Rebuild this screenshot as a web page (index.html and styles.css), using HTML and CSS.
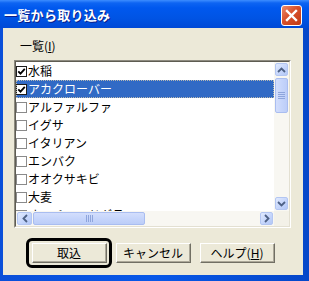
FILE: index.html
```html
<!DOCTYPE html>
<html lang="ja">
<head>
  <meta charset="UTF-8">
  <title>一覧から取り込み</title>
  <link rel="stylesheet" href="styles.css">
</head>
<body>

<div class="window">
  <div class="titlebar">
    <span class="title">一覧から取り込み</span>
    <span class="close">
      <svg width="13" height="13" viewBox="0 0 13 13"><path d="M2 2 L11 11 M11 2 L2 11" stroke="#fff" stroke-width="2.4" stroke-linecap="square"/></svg>
    </span>
  </div>

  <div class="body">
    <div class="label">一覧(<u>I</u>)</div>

    <div class="listbox">
      <div class="listinner">
        <div class="items">
          <div class="item"><svg class="cb" width="11" height="11" viewBox="0 0 11 11"><rect x="0.5" y="0.5" width="10" height="10" fill="#fff" stroke="#1c1c1c"/><path d="M2.3 5.3 L4.5 7.6 L8.8 2.8" fill="none" stroke="#000" stroke-width="1.8"/></svg>水稲</div>
          <div class="item selected"><svg class="cb" width="11" height="11" viewBox="0 0 11 11"><rect x="0.5" y="0.5" width="10" height="10" fill="#fff" stroke="#1c1c1c"/><path d="M2.3 5.3 L4.5 7.6 L8.8 2.8" fill="none" stroke="#000" stroke-width="1.8"/></svg>アカクローバー</div>
          <div class="item"><svg class="cb" width="11" height="11" viewBox="0 0 11 11"><rect x="0.5" y="0.5" width="10" height="10" fill="#fff" stroke="#8a8a8a"/></svg>アルファルファ</div>
          <div class="item"><svg class="cb" width="11" height="11" viewBox="0 0 11 11"><rect x="0.5" y="0.5" width="10" height="10" fill="#fff" stroke="#8a8a8a"/></svg>イグサ</div>
          <div class="item"><svg class="cb" width="11" height="11" viewBox="0 0 11 11"><rect x="0.5" y="0.5" width="10" height="10" fill="#fff" stroke="#8a8a8a"/></svg>イタリアン</div>
          <div class="item"><svg class="cb" width="11" height="11" viewBox="0 0 11 11"><rect x="0.5" y="0.5" width="10" height="10" fill="#fff" stroke="#8a8a8a"/></svg>エンバク</div>
          <div class="item"><svg class="cb" width="11" height="11" viewBox="0 0 11 11"><rect x="0.5" y="0.5" width="10" height="10" fill="#fff" stroke="#8a8a8a"/></svg>オオクサキビ</div>
          <div class="item"><svg class="cb" width="11" height="11" viewBox="0 0 11 11"><rect x="0.5" y="0.5" width="10" height="10" fill="#fff" stroke="#8a8a8a"/></svg>大麦</div>
          <div class="item"><svg class="cb" width="11" height="11" viewBox="0 0 11 11"><rect x="0.5" y="0.5" width="10" height="10" fill="#fff" stroke="#8a8a8a"/></svg>オーチャードグラス</div>
        </div>

        <div class="vscroll">
          <div class="sbtn"><svg width="9" height="6" viewBox="0 0 9 6"><path d="M1 5 L4.5 1.5 L8 5" fill="none" stroke="#4d6185" stroke-width="1.8"/></svg></div>
          <div class="vthumb"><span></span><span></span><span></span><span></span></div>
          <div class="fill"></div>
          <div class="sbtn"><svg width="9" height="6" viewBox="0 0 9 6"><path d="M1 1 L4.5 4.5 L8 1" fill="none" stroke="#4d6185" stroke-width="1.8"/></svg></div>
        </div>

        <div class="hscroll">
          <div class="sbtn"><svg width="6" height="9" viewBox="0 0 6 9"><path d="M5 1 L1.5 4.5 L5 8" fill="none" stroke="#4d6185" stroke-width="1.8"/></svg></div>
          <div class="hthumb"><span></span><span></span><span></span><span></span></div>
          <div class="fill"></div>
          <div class="sbtn"><svg width="6" height="9" viewBox="0 0 6 9"><path d="M1 1 L4.5 4.5 L1 8" fill="none" stroke="#4d6185" stroke-width="1.8"/></svg></div>
        </div>

        <div class="corner"></div>
      </div>
    </div>

    <div class="buttons">
      <button class="btn default">取込</button>
      <button class="btn">キャンセル</button>
      <button class="btn">ヘルプ(<u>H</u>)</button>
    </div>
  </div>
</div>

</body>
</html>
```

FILE: styles.css
```css
* {
  box-sizing: border-box;
}

body {
  margin: 0;
  width: 309px;
  height: 281px;
  overflow: hidden;
  font-family: "Noto Sans CJK JP", "Noto Sans", sans-serif;
  font-size: 12px;
}

.window {
  width: 309px;
  height: 281px;
  display: flex;
  flex-direction: column;
  background: linear-gradient(to right, #0a4fd9, #0858e8 50%, #0547c9);
  padding: 0 6px 6px 3px;
}

.titlebar {
  height: 28px;
  margin: 0 -6px 0 -3px;
  display: flex;
  align-items: center;
  justify-content: space-between;
  padding: 0 7px 0 4px;
  background: linear-gradient(#3d8dff 0, #0d64f2 3px, #0058ee 8px, #0054e4 18px, #0049d6 28px);
}

.title {
  color: #fff;
  font-weight: bold;
  font-size: 13px;
  text-shadow: 1px 1px #0a1f8a;
  letter-spacing: 0.3px;
}

.close {
  width: 21px;
  height: 21px;
  border: 1px solid #fff;
  border-radius: 3px;
  background: linear-gradient(135deg, #eb8b6c, #d8502b 45%, #c23a14);
  display: flex;
  align-items: center;
  justify-content: center;
  margin-top: 2px;
}

.body {
  flex: 1;
  background: #ece9d8;
  padding: 10px 0 0 11px;
}

.label {
  height: 16px;
  line-height: 16px;
  padding-left: 6px;
  margin-bottom: 6px;
}

.label u, .btn u {
  text-underline-offset: 1px;
}

.listbox {
  width: 277px;
  height: 168px;
  border: 1px solid;
  border-color: #8d8b80 #fff #fff #8d8b80;
}

.listinner {
  width: 100%;
  height: 100%;
  border: 1px solid;
  border-color: #5e5c52 #e3e0d2 #e3e0d2 #5e5c52;
  background: #fff;
  display: grid;
  grid-template-columns: 1fr 15px;
  grid-template-rows: 1fr 15px;
}

.items {
  overflow: hidden;
}

.item {
  height: 18px;
  line-height: 18px;
  display: flex;
  align-items: center;
  white-space: nowrap;
  color: #000;
}

.item .cb {
  flex: none;
  margin-right: 1px;
}

.item.selected {
  background: #316ac5;
  color: #fff;
  outline: 1px dotted #b8b8b0;
  outline-offset: -1px;
}

.vscroll, .hscroll {
  background: #f8f7f2;
  display: flex;
  padding: 1px;
}

.vscroll {
  flex-direction: column;
}

.fill {
  flex: 1;
}

.sbtn {
  flex: none;
  width: 13px;
  height: 13px;
  border: 1px solid #b3c6f2;
  border-radius: 2px;
  background: linear-gradient(135deg, #e1eafe, #c3d4fb 60%, #b4c8f6);
  display: flex;
  align-items: center;
  justify-content: center;
}

.hscroll .sbtn:first-child {
  width: 15px;
}

.vthumb, .hthumb {
  flex: none;
  border: 1px solid #a9bdf0;
  border-radius: 2px;
  background: linear-gradient(to right, #d3defc, #c6d5fb 50%, #bccdf8);
  display: flex;
  align-items: center;
  justify-content: center;
}

.vthumb {
  height: 35px;
  margin-top: 2px;
  flex-direction: column;
  gap: 1px;
}

.vthumb span {
  width: 7px;
  height: 1px;
  background: #8ea5dc;
}

.hthumb {
  width: 112px;
  margin-left: 1px;
  background: linear-gradient(#d3defc, #c6d5fb 50%, #bccdf8);
  gap: 1px;
}

.hthumb span {
  width: 1px;
  height: 7px;
  background: #8ea5dc;
}

.corner {
  background: #f3f1e8;
}

.buttons {
  display: flex;
  justify-content: center;
  gap: 9px;
  margin: 15px 0 0 -11px;
}

.btn {
  position: relative;
  width: 75px;
  height: 20px;
  padding: 0;
  font-family: "Noto Sans CJK JP", "Noto Sans", sans-serif;
  font-size: 12px;
  line-height: 16px;
  color: #000;
  background: #ece9d8;
  border: 1px solid;
  border-color: #fff #716f64 #716f64 #fff;
  box-shadow: inset -1px -1px #aca899;
}

.btn.default::before {
  content: "";
  position: absolute;
  top: -6px;
  left: -7px;
  right: -6px;
  bottom: -6px;
  border: 3px solid #000;
  border-radius: 6px;
}
```
